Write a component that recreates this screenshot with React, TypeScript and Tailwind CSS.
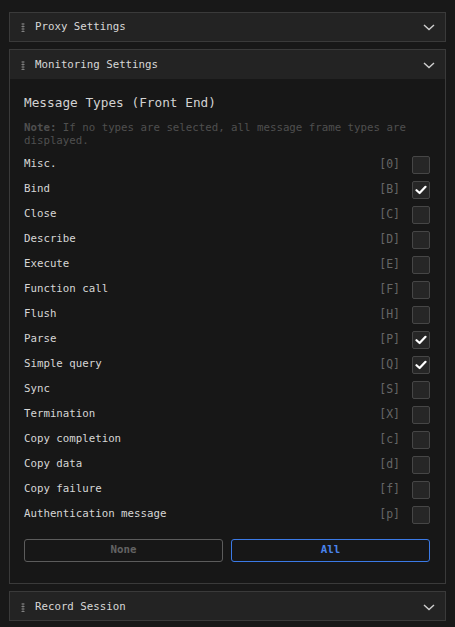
import React from "react";

const mono = { fontFamily: '"DejaVu Sans Mono", "Liberation Mono", monospace' };

function Grip() {
  return (
    <svg width="4" height="9" viewBox="0 0 4 9" className="shrink-0">
      <rect x="1.5" y="0" width="1" height="9" fill="#5e5e5e" />
      <rect x="0.5" y="0.5" width="3" height="1" fill="#808080" />
      <rect x="0.5" y="3" width="3" height="1" fill="#808080" />
      <rect x="0.5" y="5.5" width="3" height="1" fill="#808080" />
      <rect x="0.5" y="8" width="3" height="1" fill="#808080" />
    </svg>
  );
}

function Chevron() {
  return (
    <svg width="12" height="7" viewBox="0 0 12 7" className="shrink-0">
      <polyline points="1,1 6,5.5 11,1" fill="none" stroke="#cfcfcf" strokeWidth="1.4" />
    </svg>
  );
}

function Header({ title, variant }: { title: string; variant?: "tall" | "low" }) {
  const cls =
    variant === "tall" ? "h-[29px] pt-[1px]" : variant === "low" ? "h-[28px] pt-[2px]" : "h-[28px]";
  return (
    <div className={`${cls} flex items-center pl-[11px] pr-[10px] bg-[#232323]`}>
      <Grip />
      <span className="ml-[10px] text-[10.75px] leading-[14px] text-[#d8d8d8] flex-1">{title}</span>
      <Chevron />
    </div>
  );
}

function Check() {
  return (
    <svg width="12" height="10" viewBox="0 0 12 10">
      <polyline points="1.5,5.2 4.6,8 10.5,1.8" fill="none" stroke="#ffffff" strokeWidth="2.2" strokeLinecap="round" strokeLinejoin="round" />
    </svg>
  );
}

const rows: [string, string, boolean][] = [
  ["Misc.", "[0]", false],
  ["Bind", "[B]", true],
  ["Close", "[C]", false],
  ["Describe", "[D]", false],
  ["Execute", "[E]", false],
  ["Function call", "[F]", false],
  ["Flush", "[H]", false],
  ["Parse", "[P]", true],
  ["Simple query", "[Q]", true],
  ["Sync", "[S]", false],
  ["Termination", "[X]", false],
  ["Copy completion", "[c]", false],
  ["Copy data", "[d]", false],
  ["Copy failure", "[f]", false],
  ["Authentication message", "[p]", false],
];

export default function App() {
  return (
    <div className="w-[455px] h-[627px] bg-[#181818] px-[9px] pt-[12px] flex flex-col gap-[7px]" style={mono}>
      <div className="border border-[#3a3a3a]">
        <Header title="Proxy Settings" />
      </div>
      <div className="border border-[#3a3a3a]">
        <Header title="Monitoring Settings" variant="tall" />
        <div className="bg-[#171717] pl-[14px] pr-[15px] pt-[16px] pb-[21px]">
          <div className="text-[12.75px] leading-[16px] text-[#d2d2d2]">Message Types (Front End)</div>
          <div className="mt-[10px] text-[10.75px] leading-[13px] text-[#4f4f4f]">
            <span className="font-bold">Note:</span> If no types are selected, all message frame types are displayed.
          </div>
          <div className="mt-[5px] flex flex-col">
            {rows.map(([label, code, checked]) => (
              <div key={code} className="h-[25px] flex items-center">
                <span className="flex-1 text-[10.75px] text-[#d6d6d6]">{label}</span>
                <span className="text-[11.5px] text-[#666666] mr-[12px]">{code}</span>
                <div className="w-[18px] h-[18px] border border-[#464646] bg-[#262626] rounded-[2px] flex items-center justify-center">
                  {checked && <Check />}
                </div>
              </div>
            ))}
          </div>
          <div className="mt-[12px] flex gap-[8px]">
            <button className="flex-1 h-[23px] rounded-[3px] border border-[#5c5c5c] text-[10.75px] font-bold text-[#636363] flex items-center justify-center">
              None
            </button>
            <button className="flex-1 h-[23px] rounded-[3px] border border-[#3b7ae6] text-[10.75px] font-bold text-[#4a84ec] flex items-center justify-center">
              All
            </button>
          </div>
        </div>
      </div>
      <div className="border border-[#3a3a3a]">
        <Header title="Record Session" variant="low" />
      </div>
    </div>
  );
}
